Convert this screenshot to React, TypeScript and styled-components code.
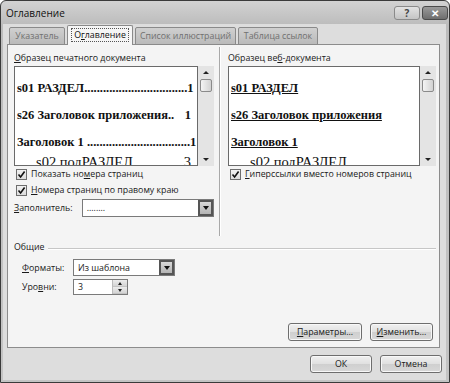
import React from "react";
import styled, { createGlobalStyle } from "styled-components";

const GlobalStyle = createGlobalStyle`
  html, body {
    margin: 0;
    padding: 0;
    background: #ffffff;
    overflow: hidden;
  }
  body {
    font-family: "Open Sans", "Noto Sans", Arial, sans-serif;
    color: #1a1a1a;
  }
`;

const uiSize = "8.8px";

const Window = styled.div`
  width: 450px;
  height: 383px;
  box-sizing: border-box;
  border: 1px solid #3a3a3a;
  border-radius: 6px 6px 0 0;
  background: linear-gradient(#d2d2d2, #bcbcbc 24px, #c4c4c4);
  display: flex;
  flex-direction: column;
`;

const TitleBar = styled.div`
  height: 23px;
  display: flex;
  align-items: center;
  padding: 0 1px 0 5px;
`;

const Title = styled.span`
  font-size: 10px;
  color: #111;
  flex: 1;
  margin-top: 1px;
`;

const CaptionButton = styled.div<{ $close?: boolean }>`
  width: 26px;
  height: 14px;
  margin-left: 2px;
  margin-top: 1px;
  box-sizing: border-box;
  border: 1px solid ${(p) => (p.$close ? "#4a4a4a" : "#8a8a8a")};
  border-radius: 3px;
  background: ${(p) =>
    p.$close ? "linear-gradient(#9a9a9a, #6e6e6e)" : "linear-gradient(#e2e2e2, #c4c4c4)"};
  color: ${(p) => (p.$close ? "#ffffff" : "#444")};
  font-size: 10px;
  font-weight: bold;
  display: flex;
  align-items: center;
  justify-content: center;
  line-height: 1;
`;

const Client = styled.div`
  flex: 1;
  margin: 0 3px 2px 2px;
  padding: 0 4px 0 4px;
  background: #dddddd;
  display: flex;
  flex-direction: column;
`;

const TabStrip = styled.div`
  height: 21px;
  margin-bottom: -1px;
  padding-left: 2px;
  display: flex;
  align-items: flex-end;
  gap: 2px;
  position: relative;
  z-index: 1;
  box-sizing: border-box;
`;

const Tab = styled.div<{ $active?: boolean; $w: number }>`
  width: ${(p) => p.$w}px;
  height: ${(p) => (p.$active ? 20 : 18)}px;
  box-sizing: border-box;
  border: 1px solid #8a8a8a;
  border-bottom: ${(p) => (p.$active ? "none" : "1px solid #8a8a8a")};
  border-radius: 2px 2px 0 0;
  background: ${(p) => (p.$active ? "#f6f6f6" : "linear-gradient(#d0d0d0, #bababa)")};
  color: ${(p) => (p.$active ? "#111" : "#707070")};
  font-size: ${uiSize};
  white-space: nowrap;
  display: flex;
  align-items: center;
  justify-content: center;
  padding-bottom: ${(p) => (p.$active ? 1 : 0)}px;
`;

const Focus = styled.span`
  border: 1px dotted #555;
  padding: 0 2px;
  line-height: 12px;
`;

const Panel = styled.div`
  height: 304px;
  box-sizing: border-box;
  margin-right: 2px;
  background: #f4f4f4;
  border: 1px solid #8c8c8c;
  padding: 6px 3px 6px 6px;
  display: flex;
  flex-direction: column;
`;

const Upper = styled.div`
  height: 184px;
  display: flex;
`;

const Column = styled.div<{ $w: number }>`
  width: ${(p) => p.$w}px;
  display: flex;
  flex-direction: column;
`;

const Separator = styled.div`
  width: 1px;
  margin: -4px 7px -1px 5px;
  background: #a8a8a8;
  border-right: 1px solid #ffffff;
`;

const Label = styled.div`
  font-size: ${uiSize};
  height: 14px;
  line-height: 14px;
  margin-bottom: 1px;
  white-space: nowrap;
`;

const PreviewRow = styled.div`
  height: 100px;
  display: flex;
`;

const Preview = styled.div`
  flex: 1;
  background: #ffffff;
  border: 1px solid #6a6a6a;
  overflow: hidden;
  padding: 8px 6px 0 2px;
  font-family: "Liberation Serif", "Times New Roman", serif;
  color: #111;
`;

const Entry = styled.div<{ $link?: boolean }>`
  display: flex;
  justify-content: space-between;
  white-space: nowrap;
  font-size: 12.5px;
  font-weight: bold;
  height: 27px;
  line-height: 27px;
  text-decoration: ${(p) => (p.$link ? "underline" : "none")};
`;

/* third-level entry: only its top shows above the box edge */
const SubEntry = styled.div`
  display: flex;
  justify-content: space-between;
  white-space: nowrap;
  font-size: 14.5px;
  height: 8px;
  line-height: 8px;
  padding: 2px 0 0 19px;
`;

const ScrollBar = styled.div`
  width: 16px;
  background: #e4e4e4;
  display: flex;
  flex-direction: column;
  align-items: center;
`;

const Arrow = styled.div<{ $down?: boolean }>`
  height: 13px;
  display: flex;
  align-items: center;
  justify-content: center;
  &::after {
    content: "";
    border-left: 3px solid transparent;
    border-right: 3px solid transparent;
    ${(p) => (p.$down ? "border-top: 3px solid #222;" : "border-bottom: 3px solid #222;")}
  }
`;

const Thumb = styled.div`
  width: 12px;
  height: 13px;
  box-sizing: border-box;
  border: 1px solid #8a8a8a;
  border-radius: 2px;
  background: linear-gradient(90deg, #f4f4f4, #d2d2d2);
`;

const Track = styled.div`
  flex: 1;
`;

const CheckRow = styled.div`
  height: 16px;
  display: flex;
  align-items: center;
  gap: 4px;
  font-size: ${uiSize};
  padding-left: 2px;
  white-space: nowrap;
`;

const Box = styled.span`
  width: 11px;
  height: 11px;
  box-sizing: border-box;
  border: 1px solid #6e6e6e;
  background: linear-gradient(#f2f2f2, #dcdcdc);
  display: flex;
  align-items: center;
  justify-content: center;
`;

const FieldRow = styled.div<{ $top: number; $h: number }>`
  display: flex;
  align-items: center;
  margin-top: ${(p) => p.$top}px;
  height: ${(p) => p.$h}px;
  font-size: ${uiSize};
  white-space: nowrap;
`;

const FieldLabel = styled.span<{ $w: number }>`
  width: ${(p) => p.$w}px;
`;

const Select = styled.div<{ $w: number }>`
  width: ${(p) => p.$w}px;
  height: 100%;
  box-sizing: border-box;
  background: #ffffff;
  border: 1px solid #7a7a7a;
  display: flex;
  align-items: center;
  padding-left: 4px;
  font-size: ${uiSize};
`;

const SelectText = styled.span`
  flex: 1;
`;

const DropButton = styled.span`
  width: 15px;
  height: 100%;
  box-sizing: border-box;
  border: 2px solid #555;
  background: linear-gradient(#d8d8d8, #b4b4b4);
  display: flex;
  align-items: center;
  justify-content: center;
  &::after {
    content: "";
    border-left: 3px solid transparent;
    border-right: 3px solid transparent;
    border-top: 4px solid #111;
  }
`;

const Spin = styled.div`
  width: 14px;
  height: 100%;
  display: flex;
  flex-direction: column;
  border-left: 1px solid #bbb;
`;

const SpinHalf = styled(Arrow)`
  height: auto;
  flex: 1;
  background: linear-gradient(#ececec, #d4d4d4);
  border-bottom: 1px solid #c4c4c4;
  &::after {
    border-left-width: 2px;
    border-right-width: 2px;
  }
`;

const GroupHeader = styled.div`
  margin-top: 5px;
  height: 14px;
  display: flex;
  align-items: center;
  font-size: ${uiSize};
  gap: 3px;
`;

const GroupLine = styled.div`
  flex: 1;
  height: 1px;
  margin-top: 4px;
  background: #c6c6c6;
  border-bottom: 1px solid #ffffff;
`;

const Group = styled.div`
  padding-left: 8px;
`;

const ButtonRow = styled.div<{ $pad: number }>`
  display: flex;
  justify-content: flex-end;
  gap: 8px;
  padding-right: ${(p) => p.$pad}px;
`;

const PanelButtons = styled(ButtonRow)`
  margin-top: auto;
`;

const Footer = styled(ButtonRow)`
  padding-top: 7px;
`;

const Button = styled.div<{ $w: number }>`
  width: ${(p) => p.$w}px;
  height: 18px;
  box-sizing: border-box;
  border: 1px solid #6e6e6e;
  border-radius: 3px;
  background: linear-gradient(#f0f0f0, #e0e0e0 50%, #cfcfcf 51%, #d8d8d8);
  box-shadow: inset 0 0 0 1px #f8f8f8;
  font-size: ${uiSize};
  white-space: nowrap;
  display: flex;
  align-items: center;
  justify-content: center;
`;

const Check = () => (
  <Box>
    <svg width="9" height="9" viewBox="0 0 9 9">
      <path d="M1.5 4.5 L3.6 7 L7.6 1.5" fill="none" stroke="#111" strokeWidth="1.6" />
    </svg>
  </Box>
);

const Scroll = () => (
  <ScrollBar>
    <Arrow />
    <Thumb />
    <Track />
    <Arrow $down />
  </ScrollBar>
);

const printEntries = [
  { text: "s01 РАЗДЕЛ", leader: ".".repeat(33), page: "1" },
  { text: "s26 Заголовок приложения", leader: "..", page: "1" },
  { text: "Заголовок 1 ", leader: ".".repeat(33), page: "1" },
];

export default function App() {
  return (
    <>
      <GlobalStyle />
      <Window>
        <TitleBar>
          <Title>Оглавление</Title>
          <CaptionButton>?</CaptionButton>
          <CaptionButton $close>✕</CaptionButton>
        </TitleBar>
        <Client>
          <TabStrip>
            <Tab $w={56}>Указатель</Tab>
            <Tab $w={66} $active>
              <Focus>
                О<u>г</u>лавление
              </Focus>
            </Tab>
            <Tab $w={101}>Список иллюстраций</Tab>
            <Tab $w={80}>Таблица ссылок</Tab>
          </TabStrip>
          <Panel>
            <Upper>
              <Column $w={200}>
                <Label>
                  <u>О</u>бразец печатного документа
                </Label>
                <PreviewRow>
                  <Preview>
                    {printEntries.map((e) => (
                      <Entry key={e.text}>
                        <span>
                          {e.text}
                          {e.leader}
                        </span>
                        <span>{e.page}</span>
                      </Entry>
                    ))}
                    <SubEntry>
                      <span>s02 подРАЗДЕЛ</span>
                      <span>3</span>
                    </SubEntry>
                  </Preview>
                  <Scroll />
                </PreviewRow>
                <CheckRow>
                  <Check />
                  <span>
                    Показать но<u>м</u>ера страниц
                  </span>
                </CheckRow>
                <CheckRow>
                  <Check />
                  <span>
                    <u>Н</u>омера страниц по правому краю
                  </span>
                </CheckRow>
                <FieldRow $top={1} $h={18}>
                  <FieldLabel $w={68}>
                    <u>З</u>аполнитель:
                  </FieldLabel>
                  <Select $w={133}>
                    <SelectText>........</SelectText>
                    <DropButton />
                  </Select>
                </FieldRow>
              </Column>
              <Separator />
              <Column $w={208}>
                <Label>
                  Образец ве<u>б</u>-документа
                </Label>
                <PreviewRow>
                  <Preview>
                    {printEntries.map((e) => (
                      <Entry key={e.text} $link>
                        <span>{e.text.trim()}</span>
                      </Entry>
                    ))}
                    <SubEntry>
                      <span>s02 подРАЗДЕЛ</span>
                    </SubEntry>
                  </Preview>
                  <Scroll />
                </PreviewRow>
                <CheckRow>
                  <Check />
                  <span>
                    <u>Г</u>иперссылки вместо номеров страниц
                  </span>
                </CheckRow>
              </Column>
            </Upper>
            <GroupHeader>
              <span>Общие</span>
              <GroupLine />
            </GroupHeader>
            <Group>
              <FieldRow $top={5} $h={17}>
                <FieldLabel $w={51}>
                  <u>Ф</u>орматы:
                </FieldLabel>
                <Select $w={102}>
                  <SelectText>Из шаблона</SelectText>
                  <DropButton />
                </Select>
              </FieldRow>
              <FieldRow $top={3} $h={16}>
                <FieldLabel $w={51}>
                  Уро<u>в</u>ни:
                </FieldLabel>
                <Select $w={55}>
                  <SelectText>3</SelectText>
                  <Spin>
                    <SpinHalf />
                    <SpinHalf $down />
                  </Spin>
                </Select>
              </FieldRow>
            </Group>
            <PanelButtons $pad={3}>
              <Button $w={74}>
                <span>
                  <u>П</u>араметры...
                </span>
              </Button>
              <Button $w={63}>
                <span>
                  <u>И</u>зменить...
                </span>
              </Button>
            </PanelButtons>
          </Panel>
          <Footer $pad={0}>
            <Button $w={62}>ОК</Button>
            <Button $w={62}>Отмена</Button>
          </Footer>
        </Client>
      </Window>
    </>
  );
}
